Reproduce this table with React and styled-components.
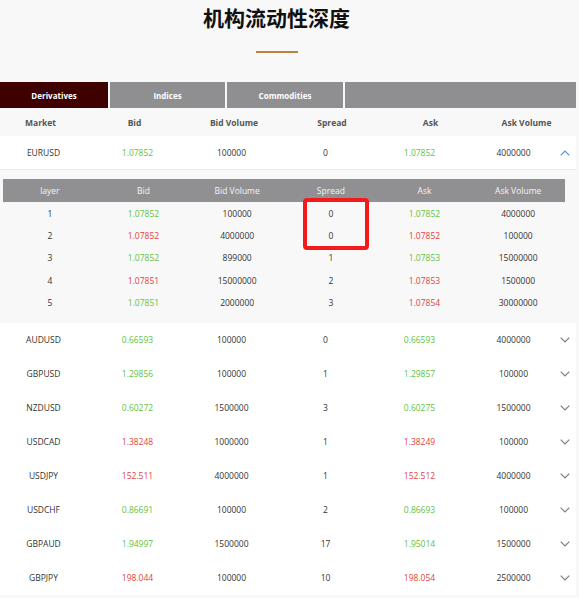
import React from 'react';
import styled, { createGlobalStyle } from 'styled-components';

const GlobalStyle = createGlobalStyle`
  html, body { margin: 0; padding: 0; background: #f8f8f8; }
  body { font-family: "Open Sans", "Noto Sans", "Liberation Sans", sans-serif; color: #333; }
`;

const Page = styled.div`
  width: 576px;
  padding-bottom: 3px;
`;

const TitleBlock = styled.header`
  width: 553px;
  display: flex;
  flex-direction: column;
  align-items: center;
  padding-top: 5px;
`;

const Title = styled.h1`
  margin: 0;
  font-family: "Noto Sans CJK SC", "Noto Sans", sans-serif;
  font-size: 21px;
  line-height: 25px;
  font-weight: 700;
  color: #111;
`;

const Underline = styled.div`
  width: 42px;
  height: 2px;
  margin-top: 21px;
  background: #b7823f;
`;

const Tabs = styled.nav`
  display: flex;
  gap: 2px;
  margin-top: 29px;
  height: 26px;
`;

const Tab = styled.div`
  width: ${p => (p.$w ? `${p.$w}px` : 'auto')};
  flex: ${p => (p.$w ? '0 0 auto' : '1')};
  background: ${p => (p.$active ? '#3f0000' : '#8f8f91')};
  color: #fff;
  font-size: 8px;
  font-weight: 700;
  display: flex;
  align-items: center;
  justify-content: center;
`;

const HeaderRow = styled.div`
  display: grid;
  grid-template-columns: 81px 107px 92px 104px 93px 1fr;
  height: 28px;
  align-items: center;
  font-size: 8.5px;
  font-weight: 700;
  color: #555;
  text-align: center;
`;

const Row = styled.div`
  display: grid;
  grid-template-columns: repeat(6, 94px) 1fr;
  height: 34px;
  box-sizing: border-box;
  align-items: center;
  background: #fff;
  font-size: 8.5px;
  border-bottom: ${p => (p.$open ? '1px solid #ededed' : 'none')};
`;

const Cell = styled.div`
  padding-right: 7px;
  text-align: center;
  color: ${p => (p.$tone === 'up' ? '#62c23c' : p.$tone === 'down' ? '#e0443e' : '#333')};
`;

const ChevronCell = styled.div`
  display: flex;
  margin-left: -4px;
`;

const Panel = styled.section`
  position: relative;
  padding: 9px 0 9.5px 3px;
`;

const SubTable = styled.div`
  width: 562px;
`;

const SubHeader = styled.div`
  display: grid;
  grid-template-columns: repeat(6, 1fr);
  height: 23px;
  align-items: center;
  background: #909092;
  color: #f4f4f4;
  font-size: 8.5px;
  text-align: center;
`;

const SubRow = styled.div`
  display: grid;
  grid-template-columns: repeat(6, 1fr);
  height: 22.3px;
  align-items: center;
  font-size: 8.5px;
  text-align: center;
`;

const SubCell = styled.div`
  color: ${p => (p.$tone === 'up' ? '#62c23c' : p.$tone === 'down' ? '#e0443e' : '#333')};
`;

const Highlight = styled.div`
  position: absolute;
  left: 303px;
  top: 28px;
  width: 66px;
  height: 52px;
  box-sizing: border-box;
  border: 4px solid #f21a1a;
  border-radius: 4px;
`;

const Chevron = ({ up }) => (
  <svg width="10" height="6" viewBox="0 0 10 6">
    <polyline
      points={up ? '0.7,5.3 5,1 9.3,5.3' : '0.7,0.7 5,5 9.3,0.7'}
      fill="none"
      stroke={up ? '#4a8fe0' : '#7a7a7a'}
      strokeWidth="1.1"
    />
  </svg>
);

const markets = [
  ['EURUSD', '1.07852', 'up', '100000', '0', '1.07852', 'up', '4000000'],
  ['AUDUSD', '0.66593', 'up', '100000', '0', '0.66593', 'up', '4000000'],
  ['GBPUSD', '1.29856', 'up', '100000', '1', '1.29857', 'up', '100000'],
  ['NZDUSD', '0.60272', 'up', '1500000', '3', '0.60275', 'up', '1500000'],
  ['USDCAD', '1.38248', 'down', '1000000', '1', '1.38249', 'down', '100000'],
  ['USDJPY', '152.511', 'down', '4000000', '1', '152.512', 'down', '4000000'],
  ['USDCHF', '0.86691', 'up', '100000', '2', '0.86693', 'up', '100000'],
  ['GBPAUD', '1.94997', 'up', '1500000', '17', '1.95014', 'up', '1500000'],
  ['GBPJPY', '198.044', 'down', '100000', '10', '198.054', 'down', '2500000'],
];

const layers = [
  ['1', '1.07852', 'up', '100000', '0', '1.07852', 'up', '4000000'],
  ['2', '1.07852', 'down', '4000000', '0', '1.07852', 'down', '100000'],
  ['3', '1.07852', 'up', '899000', '1', '1.07853', 'up', '15000000'],
  ['4', '1.07851', 'down', '15000000', '2', '1.07853', 'down', '1500000'],
  ['5', '1.07851', 'up', '2000000', '3', '1.07854', 'down', '30000000'],
];

const MarketRow = ({ m, open }) => (
  <Row $open={open}>
    <Cell>{m[0]}</Cell>
    <Cell $tone={m[2]}>{m[1]}</Cell>
    <Cell>{m[3]}</Cell>
    <Cell>{m[4]}</Cell>
    <Cell $tone={m[6]}>{m[5]}</Cell>
    <Cell>{m[7]}</Cell>
    <ChevronCell><Chevron up={open} /></ChevronCell>
  </Row>
);

export default function App() {
  return (
    <Page>
      <GlobalStyle />
      <TitleBlock>
        <Title>机构流动性深度</Title>
        <Underline />
      </TitleBlock>
      <Tabs>
        <Tab $w={108} $active>Derivatives</Tab>
        <Tab $w={115}>Indices</Tab>
        <Tab $w={116}>Commodities</Tab>
        <Tab />
      </Tabs>
      <HeaderRow>
        <div>Market</div>
        <div>Bid</div>
        <div>Bid Volume</div>
        <div>Spread</div>
        <div>Ask</div>
        <div>Ask Volume</div>
      </HeaderRow>
      <MarketRow m={markets[0]} open />
      <Panel>
        <SubTable>
          <SubHeader>
            <div>layer</div>
            <div>Bid</div>
            <div>Bid Volume</div>
            <div>Spread</div>
            <div>Ask</div>
            <div>Ask Volume</div>
          </SubHeader>
          {layers.map(l => (
            <SubRow key={l[0]}>
              <SubCell>{l[0]}</SubCell>
              <SubCell $tone={l[2]}>{l[1]}</SubCell>
              <SubCell>{l[3]}</SubCell>
              <SubCell>{l[4]}</SubCell>
              <SubCell $tone={l[6]}>{l[5]}</SubCell>
              <SubCell>{l[7]}</SubCell>
            </SubRow>
          ))}
        </SubTable>
        <Highlight />
      </Panel>
      {markets.slice(1).map(m => (
        <MarketRow key={m[0]} m={m} />
      ))}
    </Page>
  );
}
